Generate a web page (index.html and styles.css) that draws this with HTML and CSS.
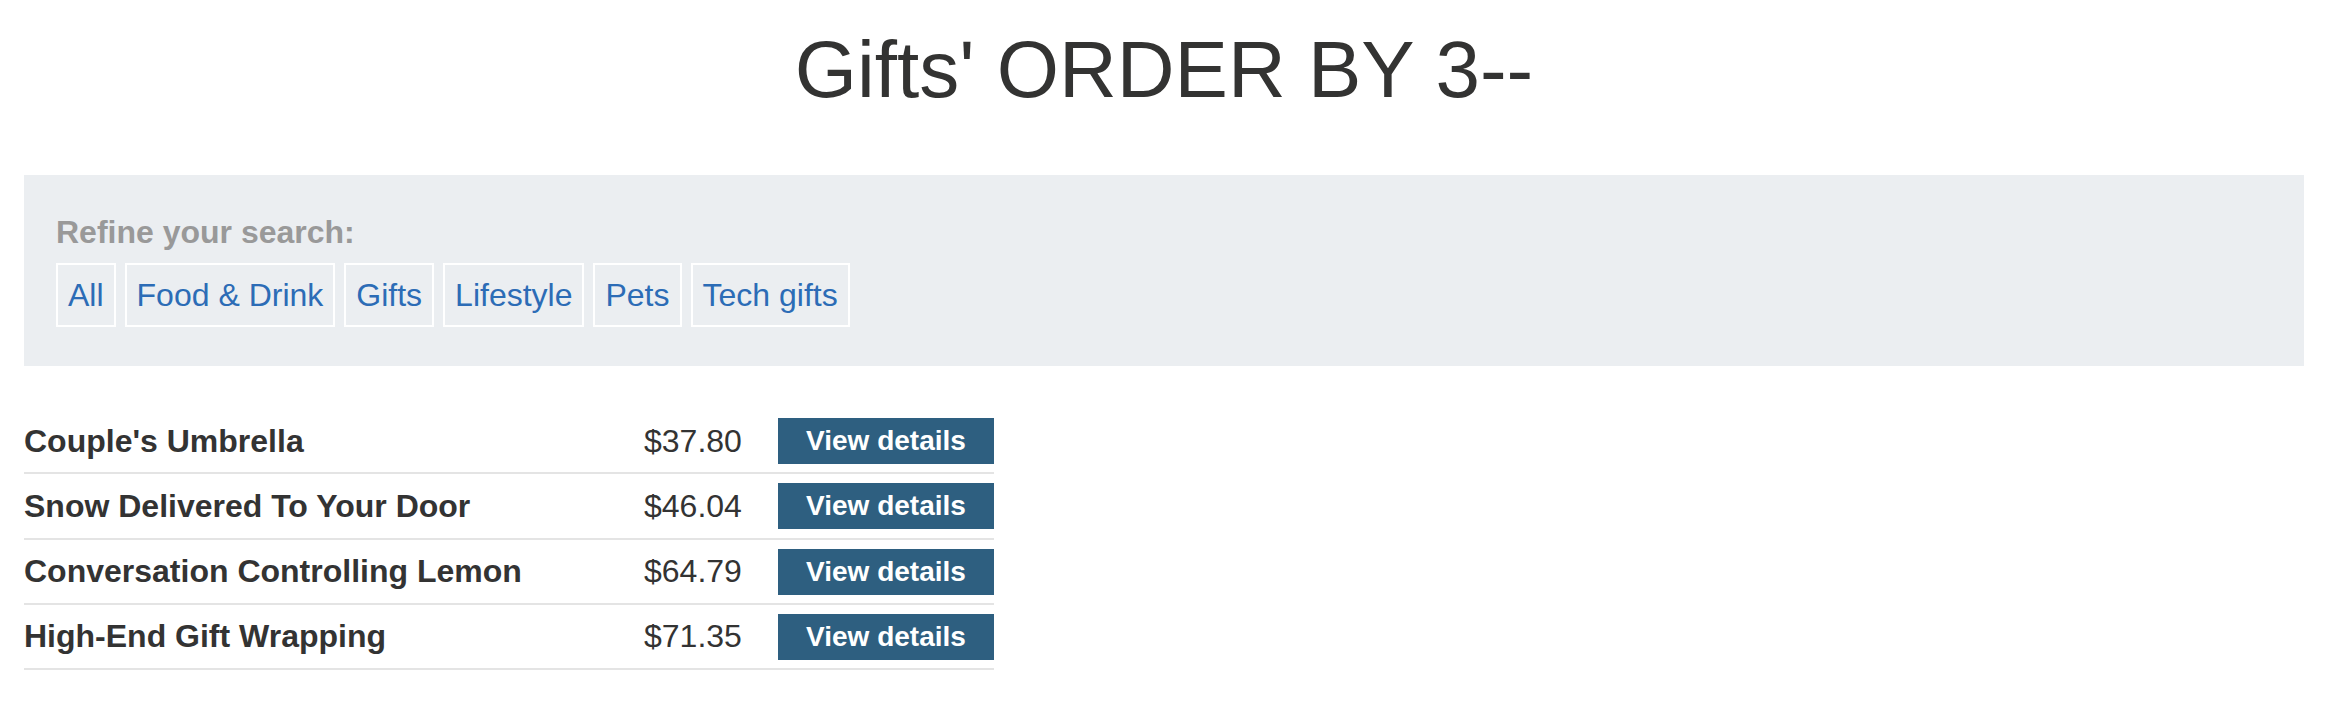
FILE: index.html
```html
<!DOCTYPE html>
<html lang="en">
<head>
<meta charset="utf-8">
<title>Gifts' ORDER BY 3--</title>
<link rel="stylesheet" href="styles.css">
</head>
<body>
<div class="container">
  <h1 class="title">Gifts' ORDER BY 3--</h1>
  <section class="filter">
    <div class="filter-label">Refine your search:</div>
    <div class="filter-list">
      <a class="filter-item" href="#">All</a>
      <a class="filter-item" href="#">Food &amp; Drink</a>
      <a class="filter-item" href="#">Gifts</a>
      <a class="filter-item" href="#">Lifestyle</a>
      <a class="filter-item" href="#">Pets</a>
      <a class="filter-item" href="#">Tech gifts</a>
    </div>
  </section>
  <div class="products">
    <div class="product-row">
      <div class="product-name">Couple's Umbrella</div>
      <div class="product-price">$37.80</div>
      <a class="btn" href="#">View details</a>
    </div>
    <div class="product-row">
      <div class="product-name">Snow Delivered To Your Door</div>
      <div class="product-price">$46.04</div>
      <a class="btn" href="#">View details</a>
    </div>
    <div class="product-row">
      <div class="product-name">Conversation Controlling Lemon</div>
      <div class="product-price">$64.79</div>
      <a class="btn" href="#">View details</a>
    </div>
    <div class="product-row">
      <div class="product-name">High-End Gift Wrapping</div>
      <div class="product-price">$71.35</div>
      <a class="btn" href="#">View details</a>
    </div>
  </div>
</div>
</body>
</html>
```

FILE: styles.css
```css
html, body {
  margin: 0;
  padding: 0;
  background: #ffffff;
}

body {
  font-family: "Liberation Sans", Arial, sans-serif;
  color: #333333;
}

.container {
  margin: 0 32px 0 24px;
}

.title {
  margin: 24px 0 59px;
  font-size: 80px;
  line-height: 92px;
  font-weight: normal;
  text-align: center;
  color: #333332;
}

.filter {
  background: #ebeef1;
  padding: 33px 32px 38px;
  height: 120px;
}

.filter-label {
  font-size: 32px;
  line-height: 48px;
  font-weight: bold;
  color: #999999;
  margin-bottom: 7px;
}

.filter-list {
  display: flex;
  gap: 9px;
}

.filter-item {
  display: block;
  font-size: 32px;
  line-height: 48px;
  padding: 6px 10px;
  border: 2px solid #ffffff;
  color: #2c6cb6;
  text-decoration: none;
}

.products {
  margin-top: 43px;
  width: 970px;
}

.product-row {
  display: grid;
  grid-template-columns: 620px 134px 216px;
  align-items: center;
  padding: 9px 0 8.33px;
  border-bottom: 2px solid #e4e4e4;
}

.product-name {
  font-size: 32px;
  font-weight: bold;
  color: #333333;
}

.product-price {
  font-size: 32px;
  color: #333333;
}

.btn {
  display: block;
  background: #2e5f80;
  color: #ffffff;
  font-size: 28px;
  font-weight: bold;
  line-height: 32px;
  padding: 7px 0;
  text-align: center;
  text-decoration: none;
}
```
